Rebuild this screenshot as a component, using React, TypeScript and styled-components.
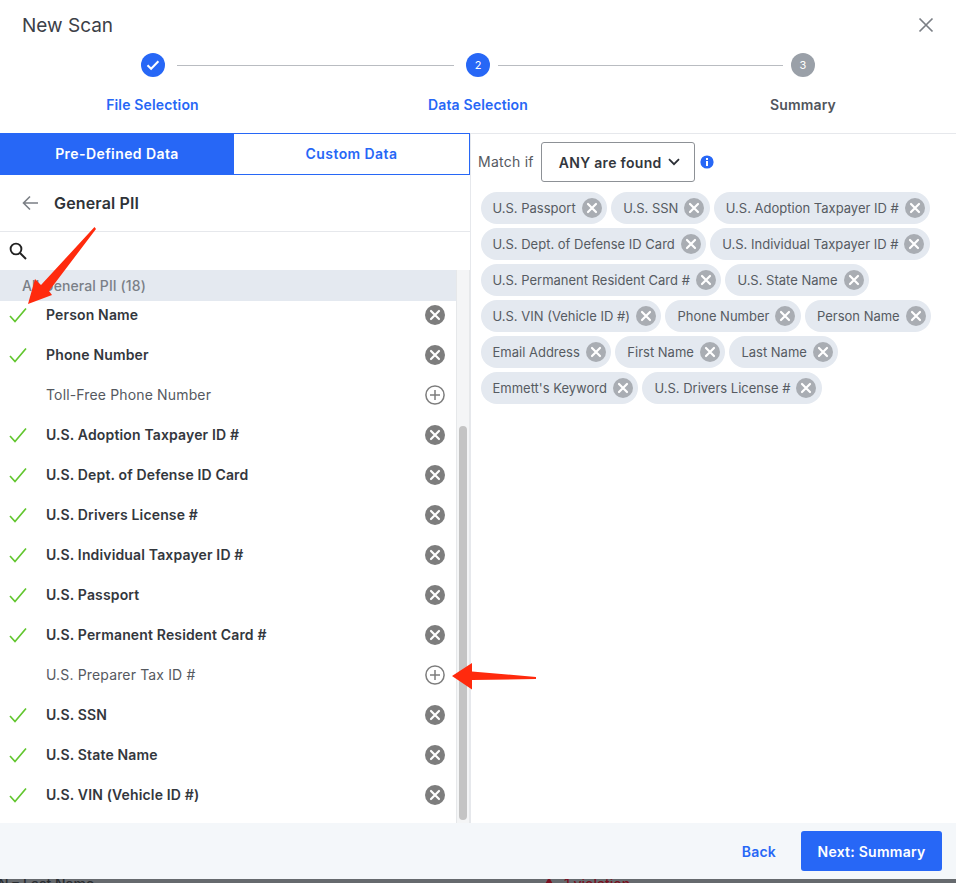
import React from 'react'
import styled, { createGlobalStyle } from 'styled-components'

const BLUE = '#2767f6'

const ITEMS = [
    { name: 'Person Name', on: true },
    { name: 'Phone Number', on: true },
    { name: 'Toll-Free Phone Number', on: false },
    { name: 'U.S. Adoption Taxpayer ID #', on: true },
    { name: 'U.S. Dept. of Defense ID Card', on: true },
    { name: 'U.S. Drivers License #', on: true },
    { name: 'U.S. Individual Taxpayer ID #', on: true },
    { name: 'U.S. Passport', on: true },
    { name: 'U.S. Permanent Resident Card #', on: true },
    { name: 'U.S. Preparer Tax ID #', on: false },
    { name: 'U.S. SSN', on: true },
    { name: 'U.S. State Name', on: true },
    { name: 'U.S. VIN (Vehicle ID #)', on: true },
]

const CHIPS = [
    'U.S. Passport', 'U.S. SSN', 'U.S. Adoption Taxpayer ID #',
    'U.S. Dept. of Defense ID Card', 'U.S. Individual Taxpayer ID #',
    'U.S. Permanent Resident Card #', 'U.S. State Name',
    'U.S. VIN (Vehicle ID #)', 'Phone Number', 'Person Name',
    'Email Address', 'First Name', 'Last Name',
    "Emmett's Keyword", 'U.S. Drivers License #',
]

const XDisc = ({ size, bg }: { size: number; bg: string }) => (
    <svg width={size} height={size} viewBox="0 0 20 20">
        <circle cx="10" cy="10" r="10" fill={bg} />
        <path d="M6 6l8 8M14 6l-8 8" stroke="#fff" strokeWidth="2.2" strokeLinecap="round" />
    </svg>
)

const PlusRing = () => (
    <svg width="20" height="20" viewBox="0 0 20 20">
        <circle cx="10" cy="10" r="9.1" fill="none" stroke="#7d7d7d" strokeWidth="1.5" />
        <path d="M10 5v10M5 10h10" stroke="#7d7d7d" strokeWidth="1.5" />
    </svg>
)

const GreenCheck = () => (
    <svg width="18" height="16" viewBox="0 0 18 16">
        <path d="M1 9l5 5.5L17 1.5" fill="none" stroke="#62c62f" strokeWidth="1.7" />
    </svg>
)

export default () => {
    return (
        <>
            <Global />
            <Modal>
                <Header>
                    <Title>New Scan</Title>
                    <Close aria-label="close">
                        <svg width="16" height="16" viewBox="0 0 16 16">
                            <path d="M1.5 1.5l13 13M14.5 1.5l-13 13" stroke="#7b7f85" strokeWidth="1.7" />
                        </svg>
                    </Close>
                </Header>
                <Stepper>
                    <Step>
                        <Circle $bg={BLUE}>
                            <svg width="14" height="12" viewBox="0 0 14 12">
                                <path d="M1.5 6.2l3.6 3.6 7.3-7.6" fill="none" stroke="#fff" strokeWidth="2" />
                            </svg>
                        </Circle>
                        <StepLabel $active>File Selection</StepLabel>
                    </Step>
                    <Line />
                    <Step>
                        <Circle $bg={BLUE}>2</Circle>
                        <StepLabel $active>Data Selection</StepLabel>
                    </Step>
                    <Line $long />
                    <Step>
                        <Circle $bg="#9aa0a8">3</Circle>
                        <StepLabel>Summary</StepLabel>
                    </Step>
                </Stepper>
                <Body>
                    <LeftPane>
                        <Tabs>
                            <Tab $active>Pre-Defined Data</Tab>
                            <Tab>Custom Data</Tab>
                        </Tabs>
                        <BackRow>
                            <svg width="16" height="16" viewBox="0 0 16 16">
                                <path d="M16 8H1.5M8 1.5L1.5 8 8 14.5" fill="none" stroke="#7b7f85" strokeWidth="1.6" />
                            </svg>
                            <BackTitle>General PII</BackTitle>
                        </BackRow>
                        <SearchRow>
                            <svg width="18" height="18" viewBox="0 0 18 18">
                                <circle cx="7" cy="7" r="5.4" fill="none" stroke="#222" strokeWidth="1.9" />
                                <path d="M11 11l6 6" stroke="#222" strokeWidth="2" />
                            </svg>
                        </SearchRow>
                        <ListArea>
                            <List>
                                <GroupHead>All General PII (18)</GroupHead>
                                {ITEMS.map(item => (
                                    <Row key={item.name}>
                                        <CheckSlot>{item.on && <GreenCheck />}</CheckSlot>
                                        <RowName $on={item.on}>{item.name}</RowName>
                                        {item.on ? <XDisc size={20} bg="#7d7d7d" /> : <PlusRing />}
                                    </Row>
                                ))}
                            </List>
                            <Track>
                                <Thumb />
                            </Track>
                        </ListArea>
                    </LeftPane>
                    <RightPane>
                        <MatchRow>
                            <MatchLabel>Match if</MatchLabel>
                            <Select>
                                ANY are found
                                <svg width="12" height="8" viewBox="0 0 12 8">
                                    <path d="M1 1.2l5 5 5-5" fill="none" stroke="#2b2f36" strokeWidth="1.8" />
                                </svg>
                            </Select>
                            <svg width="14" height="14" viewBox="0 0 14 14">
                                <circle cx="7" cy="7" r="6.6" fill={BLUE} />
                                <rect x="6" y="6" width="2" height="5" fill="#fff" />
                                <rect x="6" y="3" width="2" height="2" fill="#fff" />
                            </svg>
                        </MatchRow>
                        <Chips>
                            {CHIPS.map(c => (
                                <Chip key={c}>
                                    {c}
                                    <XDisc size={20} bg="#a9adb3" />
                                </Chip>
                            ))}
                        </Chips>
                    </RightPane>
                </Body>
                <Footer>
                    <BackButton>Back</BackButton>
                    <NextButton>Next: Summary</NextButton>
                </Footer>
            </Modal>
            <Backdrop>
                <BackdropName>N ▾ Last Name</BackdropName>
                <BackdropAlert>
                    <svg width="12" height="11" viewBox="0 0 12 11">
                        <path d="M6 0L12 11H0Z" fill="#7a1020" />
                    </svg>
                    1 violation
                </BackdropAlert>
            </Backdrop>
            <RedArrow width="956" height="883" viewBox="0 0 956 883">
                <path d="M94.5 227L96 229L49 291L52 295L28 304L35 279L41 285Z" fill="#ff2a0d" />
                <path d="M452 676L472 663L472 671.5L536 677L536 679L472 680L472 689.5Z" fill="#ff2a0d" />
            </RedArrow>
        </>
    )
}

// STYLE PROPERTIES
const Global = createGlobalStyle`
    html, body { margin: 0; padding: 0; background: #fff; }
    body { font-family: Inter, "Liberation Sans", sans-serif; overflow: hidden; }
    * { box-sizing: border-box; }
`
const Modal = styled.div`
    width: 956px;
    height: 879px;
    display: flex;
    flex-direction: column;
    background: #fff;
`
const Header = styled.div`
    height: 50px;
    padding: 0 22px;
    display: flex;
    align-items: center;
    justify-content: space-between;
`
const Title = styled.div`
    font-size: 19px;
    color: #3c4047;
`
const Close = styled.div`
    display: flex;
`
const Stepper = styled.div`
    height: 83px;
    padding: 3px 0 0 128.5px;
    display: flex;
    align-items: flex-start;
`
const Step = styled.div`
    width: 48px;
    flex: none;
    display: flex;
    flex-direction: column;
    align-items: center;
`
const Circle = styled.div<{ $bg: string }>`
    width: 24px;
    height: 24px;
    border-radius: 50%;
    background: ${p => p.$bg};
    color: #fff;
    font-size: 11px;
    display: flex;
    align-items: center;
    justify-content: center;
`
const StepLabel = styled.div<{ $active?: boolean }>`
    margin-top: 18px;
    font-size: 14px;
    font-weight: 600;
    letter-spacing: 0.15px;
    line-height: 20px;
    white-space: nowrap;
    color: ${p => (p.$active ? BLUE : '#50555c')};
`
const Line = styled.div<{ $long?: boolean }>`
    width: ${p => (p.$long ? '285px' : '277.5px')};
    margin: ${p => (p.$long ? '12px -4px 0' : '12px 0 0')};
    flex: none;
    height: 1px;
    background: #b9bcc1;
`
const Body = styled.div`
    flex: 1;
    min-height: 0;
    display: flex;
`
const LeftPane = styled.div`
    width: 470px;
    display: flex;
    flex-direction: column;
`
const Tabs = styled.div`
    height: 42px;
    display: flex;
    border: 1px solid ${BLUE};
    border-left: none;
`
const Tab = styled.div<{ $active?: boolean }>`
    width: ${p => (p.$active ? '234px' : 'auto')};
    flex: ${p => (p.$active ? 'none' : 1)};
    display: flex;
    align-items: center;
    justify-content: center;
    padding-bottom: 2px;
    font-size: 14px;
    font-weight: 600;
    letter-spacing: 0.42px;
    background: ${p => (p.$active ? BLUE : '#fff')};
    color: ${p => (p.$active ? '#fff' : BLUE)};
`
const BackRow = styled.div`
    height: 57px;
    padding: 0 0 0 22px;
    display: flex;
    align-items: center;
    gap: 16px;
    border-bottom: 1px solid #e6e8ec;
`
const BackTitle = styled.div`
    font-size: 16px;
    font-weight: 600;
    letter-spacing: 0.15px;
    color: #2f3338;
`
const SearchRow = styled.div`
    height: 38px;
    padding: 0 0 1px 9px;
    display: flex;
    align-items: center;
`
const ListArea = styled.div`
    flex: 1;
    min-height: 0;
    display: flex;
`
const List = styled.div`
    flex: 1;
    min-width: 0;
    overflow: hidden;
`
const GroupHead = styled.div`
    position: relative;
    z-index: 1;
    height: 31px;
    padding: 0 0 0 22px;
    display: flex;
    align-items: center;
    background: #e4e9f0;
    color: #7a7f87;
    font-size: 14px;
    font-weight: 500;
    letter-spacing: 0.1px;
`
const Row = styled.div`
    height: 40px;
    display: flex;
    align-items: center;
    padding: 0 11px 0 9px;
    ${GroupHead} + & { margin-top: -6px; }
`
const CheckSlot = styled.div`
    width: 37px;
    flex: none;
    display: flex;
    align-items: center;
`
const RowName = styled.div<{ $on: boolean }>`
    flex: 1;
    padding-bottom: 1px;
    font-size: 14px;
    letter-spacing: 0.15px;
    font-weight: ${p => (p.$on ? 600 : 400)};
    color: ${p => (p.$on ? '#33373d' : '#55595f')};
`
const Track = styled.div`
    width: 14px;
    flex: none;
    background: #f4f5f6;
    border-left: 1px solid #e6e8ea;
    border-right: 1px solid #e6e8ea;
    padding: 156px 2px 3px 2px;
`
const Thumb = styled.div`
    height: 100%;
    border-radius: 5px;
    background: #c4c4c4;
`
const RightPane = styled.div`
    flex: 1;
    border-top: 1px solid #e6e8ec;
    border-left: 1px solid #e6e8ec;
    padding: 8px 0 0 7px;
`
const MatchRow = styled.div`
    display: flex;
    align-items: center;
`
const MatchLabel = styled.div`
    font-size: 14px;
    letter-spacing: 0.25px;
    color: #55595f;
    margin: -2px 7px 0 0;
`
const Select = styled.div`
    width: 154px;
    height: 40px;
    margin-right: 5px;
    padding: 0 14px 0 17px;
    display: flex;
    align-items: center;
    justify-content: space-between;
    border: 1px solid #8d9196;
    border-radius: 3px;
    font-size: 14px;
    font-weight: 600;
    letter-spacing: 0.3px;
    color: #33373d;
`
const Chips = styled.div`
    margin: 10px 0 0 2.5px;
    display: flex;
    flex-wrap: wrap;
    gap: 4px;
`
const Chip = styled.div`
    height: 32px;
    padding: 0 5.5px 0 12px;
    display: flex;
    align-items: center;
    gap: 6px;
    border-radius: 16px;
    background: #e4e9f0;
    color: #565b62;
    font-size: 13px;
`
const Footer = styled.div`
    height: 56px;
    flex: none;
    padding: 0 14px 0 0;
    display: flex;
    align-items: flex-start;
    justify-content: flex-end;
    background: #f4f7fa;
`
const BackButton = styled.div`
    height: 40px;
    margin: 8px 25px 0 0;
    display: flex;
    align-items: center;
    font-size: 14px;
    font-weight: 600;
    letter-spacing: 0.2px;
    color: ${BLUE};
`
const NextButton = styled.div`
    width: 141px;
    height: 40px;
    margin-top: 8px;
    display: flex;
    align-items: center;
    justify-content: center;
    border-radius: 3px;
    background: ${BLUE};
    color: #fff;
    font-size: 14px;
    font-weight: 600;
    letter-spacing: 0.25px;
`
const Backdrop = styled.div`
    height: 4px;
    overflow: hidden;
    display: flex;
    background: #666a6e;
    font-size: 14px;
    line-height: 14px;
    font-weight: 500;
`
const BackdropName = styled.div`
    width: 545px;
    margin: -2px 0 0 -2px;
    flex: none;
    color: #2a2d31;
    white-space: nowrap;
`
const BackdropAlert = styled.div`
    margin-top: -2px;
    display: flex;
    align-items: flex-start;
    gap: 9px;
    color: #7a1020;
    white-space: nowrap;
`
const RedArrow = styled.svg`
    position: absolute;
    top: 0;
    left: 0;
    z-index: 2;
    pointer-events: none;
`
